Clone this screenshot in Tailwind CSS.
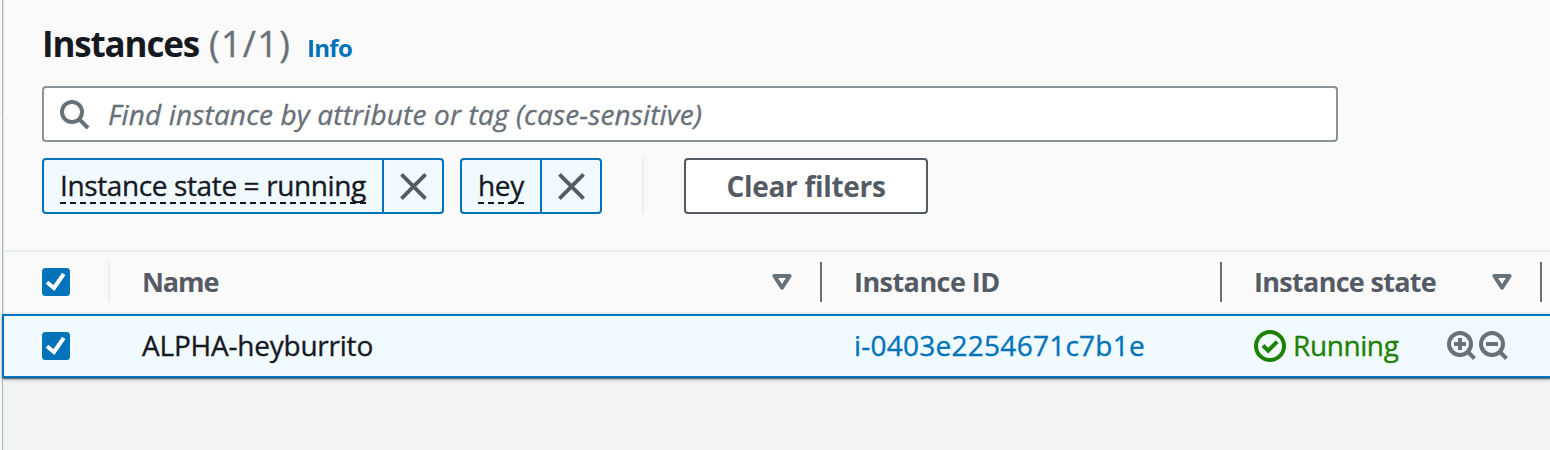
<!DOCTYPE html>
<html lang="en">
<head>
<meta charset="utf-8">
<title>Instances</title>
<script src="https://cdn.jsdelivr.net/npm/@tailwindcss/browser@4"></script>
</head>
<body class="w-[1550px] h-[450px] overflow-hidden bg-[#f2f3f3] font-['Open_Sans',sans-serif] text-[28px] leading-[36px] text-[#16191f] flex whitespace-nowrap [-webkit-text-stroke:0.35px]">
<svg width="0" height="0" class="hidden">
  <symbol id="check" viewBox="0 0 28 28"><rect width="28" height="28" rx="3.5" fill="#0073bb"/><path d="M5 14.3l7 5.7L21.8 5.8" fill="none" stroke="#fff" stroke-width="4"/></symbol>
  <symbol id="sort" viewBox="0 0 20 16"><path d="M2.4 2h15.2L10 13.6z" fill="none" stroke="#687078" stroke-width="4" stroke-linejoin="round"/></symbol>
  <symbol id="close" viewBox="0 0 28 28"><path d="M1.5 1.5l25 25M26.5 1.5l-25 25" fill="none" stroke="#545b64" stroke-width="4"/></symbol>
</svg>
<div class="w-[2px] shrink-0 bg-[#fafafa] pt-[113px]"><div class="h-[2px] bg-[#eaeded]"></div></div>
<main class="w-[1548px] flex flex-col">
  <section class="h-[312px] shrink-0 bg-[#fafafa] border-l border-[#aab7b8] shadow-[inset_1px_0_0_#e1e5e5]">
    <div class="h-[252px] pl-[39px] pt-[22px] border-b-2 border-[#eaeded]">
      <h1 class="flex items-baseline h-[44px] leading-[44px] text-[36px]">
        <span class="w-[167px] font-bold text-[35px] tracking-[-1.15px] [-webkit-text-stroke:0px]">Instances</span>
        <span class="w-[98px] text-[#687078] tracking-[1.3px]">(1/1)</span>
        <a class="text-[24px] font-bold tracking-[-0.7px] text-[#0073bb] [-webkit-text-stroke:0px]">Info</a>
      </h1>
      <div class="mt-[20px] w-[1296px] h-[56px] flex items-center bg-white border-2 border-[#879596] rounded-[4px] pl-[16px] text-[#687078]">
        <svg class="w-[30px] h-[30px] mr-[18px] mt-[1px]" viewBox="0 0 30 30" fill="none" stroke="#687078" stroke-width="4"><circle cx="12" cy="12" r="10"/><path d="M19 19l9 9"/></svg>
        <span class="italic tracking-[0.15px]">Find instance by attribute or tag (case-sensitive)</span>
      </div>
      <div class="mt-[16px] h-[56px] flex">
        <div class="w-[402px] flex border-2 border-[#0073bb] rounded-[4px] bg-[#f1faff]">
          <div class="w-[338px] shrink-0 pl-[16px] pt-[7px]"><div class="w-[306px] h-[37px] relative tracking-[-0.38px]">Instance state = running
            <svg class="absolute left-0 top-[35px]" width="306" height="2"><path d="M0 1h306" stroke="#16191f" stroke-width="2" stroke-dasharray="6 4"/></svg></div></div>
          <div class="flex-1 border-l-2 border-[#0073bb] flex items-center justify-center"><svg class="w-[27px] h-[27px]"><use href="#close"/></svg></div>
        </div>
        <div class="ml-[16px] w-[142px] flex border-2 border-[#0073bb] rounded-[4px] bg-[#f1faff]">
          <div class="w-[78px] shrink-0 pl-[16px] pt-[7px]"><div class="w-[46px] h-[37px] relative tracking-[-0.3px]">hey
            <svg class="absolute left-0 top-[35px]" width="46" height="2"><path d="M0 1h46" stroke="#16191f" stroke-width="2" stroke-dasharray="6 4"/></svg></div></div>
          <div class="flex-1 border-l-2 border-[#0073bb] flex items-center justify-center"><svg class="w-[27px] h-[27px]"><use href="#close"/></svg></div>
        </div>
        <div class="ml-[40px] w-[2px] bg-[#eaeded]"></div>
        <button class="ml-[40px] w-[244px] border-2 border-[#545b64] rounded-[4px] bg-white text-[#545b64] font-bold tracking-[-0.3px] [-webkit-text-stroke:0px]">Clear filters</button>
      </div>
    </div>
    <div class="h-[60px] pl-[39px] flex items-center font-bold text-[27px] text-[#545b64] [-webkit-text-stroke:0px]">
      <svg class="w-[28px] h-[28px]"><use href="#check"/></svg>
      <div class="ml-[38px] w-[2px] h-[40px] bg-[#eaeded]"></div>
      <div class="w-[710px] pl-[32px] pr-[28px] flex justify-between items-center"><span class="tracking-[-1.1px]">Name</span><svg class="w-[20px] h-[16px]"><use href="#sort"/></svg></div>
      <div class="w-[2px] h-[40px] bg-[#687078]"></div>
      <div class="w-[398px] pl-[32px] tracking-[-0.55px]">Instance ID</div>
      <div class="w-[2px] h-[40px] bg-[#687078]"></div>
      <div class="w-[318px] pl-[32px] pr-[28px] flex justify-between items-center"><span class="tracking-[-0.7px]">Instance state</span><svg class="w-[20px] h-[16px]"><use href="#sort"/></svg></div>
      <div class="w-[2px] h-[40px] bg-[#687078]"></div>
    </div>
  </section>
  <div class="h-[2px] shrink-0 bg-[#eaeded] border-l border-[#aab7b8]"></div>
  <section class="h-[64px] shrink-0 pl-[38px] flex items-center bg-[#f1faff] border-2 border-r-0 border-[#0073bb] shadow-[0_1px_1px_#687078,0_2px_3px_#aab7b8]">
    <svg class="w-[28px] h-[28px]"><use href="#check"/></svg>
    <div class="ml-[72px] w-[712px] -mt-[2px] tracking-[-0.22px]">ALPHA-heyburrito</div>
    <a class="w-[400px] text-[#0073bb] -mt-[2px] tracking-[0.25px]">i-0403e2254671c7b1e</a>
    <svg class="w-[32px] h-[32px]" viewBox="0 0 32 32" fill="none" stroke="#1d8102" stroke-width="4"><circle cx="16" cy="16" r="14"/><path d="M9 15.5l5.2 5.2 9-9"/></svg>
    <span class="ml-[7px] w-[154px] text-[#1d8102] -mt-[2px] tracking-[-0.4px]">Running</span>
    <svg class="w-[30px] h-[30px]" viewBox="0 0 30 30" fill="none" stroke="#687078" stroke-width="4"><circle cx="13" cy="13" r="11"/><path d="M20.5 20.5l7 7M7 13h12M13 7v12"/></svg>
    <svg class="ml-[2px] w-[30px] h-[30px]" viewBox="0 0 30 30" fill="none" stroke="#687078" stroke-width="4"><circle cx="13" cy="13" r="11"/><path d="M20.5 20.5l7 7M7 13h12"/></svg>
  </section>
  <div class="flex-1 border-l border-[#aab7b8]"></div>
</main>
</body>
</html>
